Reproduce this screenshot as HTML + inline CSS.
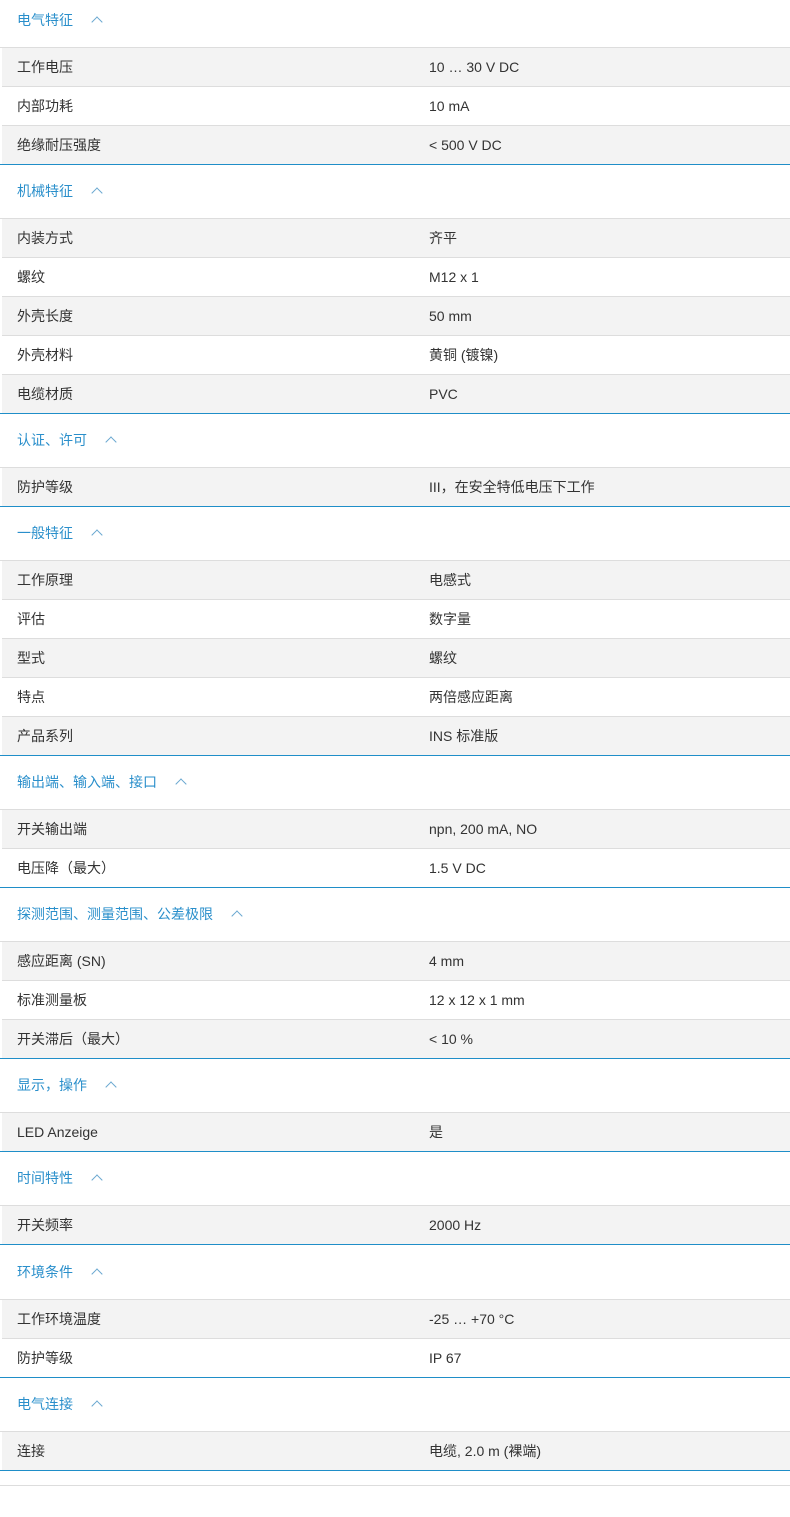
<!DOCTYPE html>
<html><head><meta charset="utf-8"><style>
body{margin:0;background:#fff;font-family:"Liberation Sans","Noto Sans CJK SC",sans-serif;font-size:14px;color:#333;width:790px;overflow:hidden}
.wrap{margin-top:-6px}
.sec{border-bottom:1px solid #1f8ec8}
.hd{height:53px;line-height:53px;border-bottom:1px solid #ddd;padding-left:17px;color:#2a8fcb;font-size:14px}
.hd span.c{display:inline-block;width:7px;height:7px;border-left:1.3px solid #6aa8d0;border-top:1.3px solid #6aa8d0;transform:rotate(45deg);margin-left:20px;vertical-align:-1px}
.r{height:38px;line-height:38px;border-bottom:1px solid #ddd;display:flex;margin-left:2px}
.r:last-child{border-bottom:none}
.r:nth-child(even){background:#f3f3f3}
.k{width:412px;padding-left:15px}
.v{flex:1}
.end{height:14px;border-bottom:1px solid #ddd}
.last{margin-top:1px}
</style></head><body><div class="wrap">
<div class="sec"><div class="hd">电气特征<span class="c"></span></div>
<div class="r"><div class="k">工作电压</div><div class="v">10 … 30 V DC</div></div>
<div class="r"><div class="k">内部功耗</div><div class="v">10 mA</div></div>
<div class="r"><div class="k">绝缘耐压强度</div><div class="v">&lt; 500 V DC</div></div></div>
<div class="sec"><div class="hd">机械特征<span class="c"></span></div>
<div class="r"><div class="k">内装方式</div><div class="v">齐平</div></div>
<div class="r"><div class="k">螺纹</div><div class="v">M12 x 1</div></div>
<div class="r"><div class="k">外壳长度</div><div class="v">50 mm</div></div>
<div class="r"><div class="k">外壳材料</div><div class="v">黄铜 (镀镍)</div></div>
<div class="r"><div class="k">电缆材质</div><div class="v">PVC</div></div></div>
<div class="sec"><div class="hd">认证、许可<span class="c"></span></div>
<div class="r"><div class="k">防护等级</div><div class="v">III，在安全特低电压下工作</div></div></div>
<div class="sec"><div class="hd">一般特征<span class="c"></span></div>
<div class="r"><div class="k">工作原理</div><div class="v">电感式</div></div>
<div class="r"><div class="k">评估</div><div class="v">数字量</div></div>
<div class="r"><div class="k">型式</div><div class="v">螺纹</div></div>
<div class="r"><div class="k">特点</div><div class="v">两倍感应距离</div></div>
<div class="r"><div class="k">产品系列</div><div class="v">INS 标准版</div></div></div>
<div class="sec"><div class="hd">输出端、输入端、接口<span class="c"></span></div>
<div class="r"><div class="k">开关输出端</div><div class="v">npn, 200 mA, NO</div></div>
<div class="r"><div class="k">电压降（最大）</div><div class="v">1.5 V DC</div></div></div>
<div class="sec"><div class="hd">探测范围、测量范围、公差极限<span class="c"></span></div>
<div class="r"><div class="k">感应距离 (SN)</div><div class="v">4 mm</div></div>
<div class="r"><div class="k">标准测量板</div><div class="v">12 x 12 x 1 mm</div></div>
<div class="r"><div class="k">开关滞后（最大）</div><div class="v">&lt; 10 %</div></div></div>
<div class="sec"><div class="hd">显示，操作<span class="c"></span></div>
<div class="r"><div class="k">LED Anzeige</div><div class="v">是</div></div></div>
<div class="sec"><div class="hd">时间特性<span class="c"></span></div>
<div class="r"><div class="k">开关频率</div><div class="v">2000 Hz</div></div></div>
<div class="sec last"><div class="hd">环境条件<span class="c"></span></div>
<div class="r"><div class="k">工作环境温度</div><div class="v">-25 … +70 °C</div></div>
<div class="r"><div class="k">防护等级</div><div class="v">IP 67</div></div></div>
<div class="sec"><div class="hd">电气连接<span class="c"></span></div>
<div class="r"><div class="k">连接</div><div class="v">电缆, 2.0 m (裸端)</div></div></div>
<div class="end"></div>
</div></body></html>
